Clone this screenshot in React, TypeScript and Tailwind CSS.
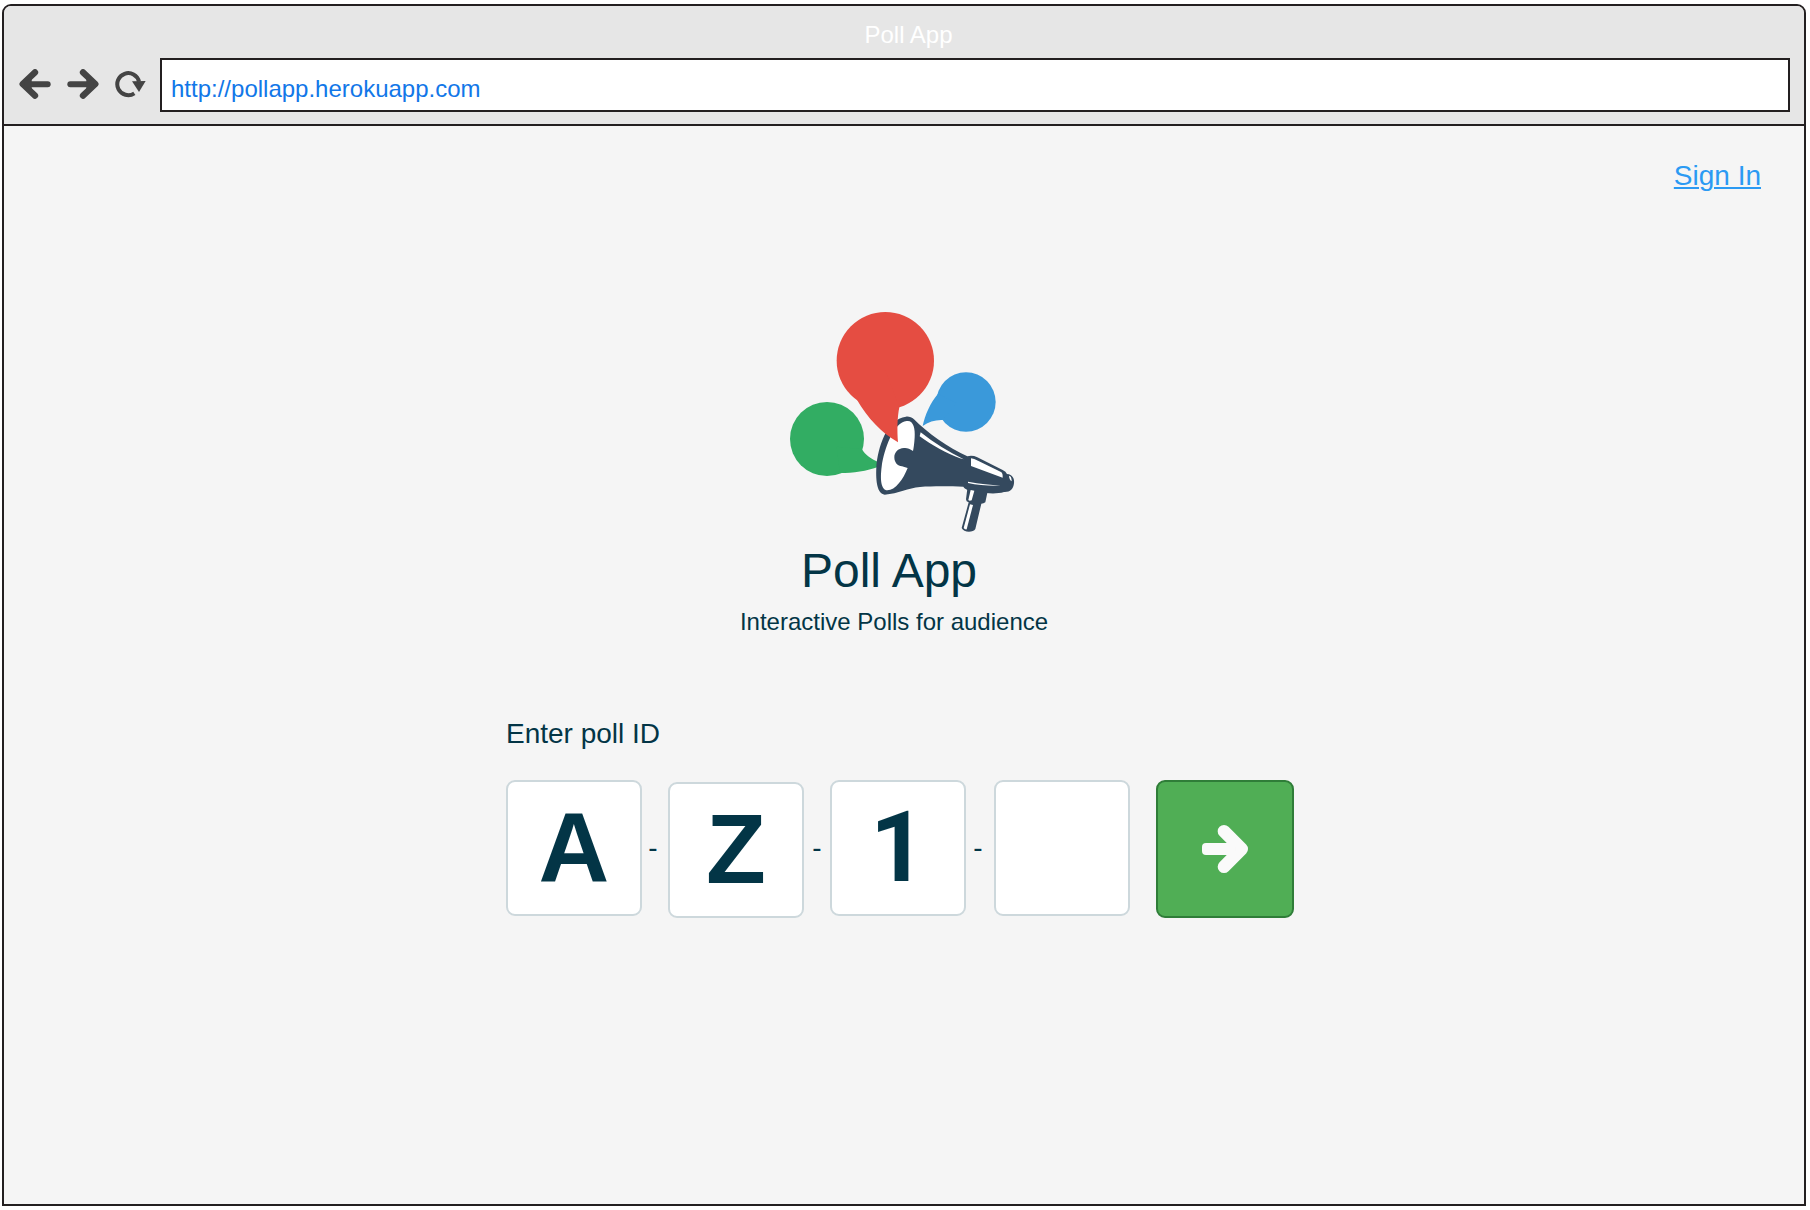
import React from "react";

function BackIcon() {
  return (
    <svg width="32" height="30" viewBox="0 0 96 90" fill="none" stroke="#444444" aria-hidden="true">
      <path d="M20 46H86" strokeWidth="18" strokeLinecap="round" />
      <path d="M48 10L11 45L48 80" strokeWidth="19" strokeLinecap="round" strokeLinejoin="round" />
      <path d="M12 45L38 22V68Z" fill="#444444" stroke="none" />
    </svg>
  );
}

function ForwardIcon() {
  return (
    <svg width="32" height="30" viewBox="0 0 96 90" fill="none" stroke="#444444" aria-hidden="true">
      <path d="M10 46H76" strokeWidth="18" strokeLinecap="round" />
      <path d="M48 10L85 45L48 80" strokeWidth="19" strokeLinecap="round" strokeLinejoin="round" />
      <path d="M84 45L58 22V68Z" fill="#444444" stroke="none" />
    </svg>
  );
}

function ReloadIcon() {
  return (
    <svg width="32" height="30" viewBox="0 0 96 90" fill="none" aria-hidden="true">
      <path d="M58 73A33 33 0 1 1 72 38" stroke="#444444" strokeWidth="12" />
      <path d="M51 37L92 36L72 69Z" fill="#444444" />
    </svg>
  );
}

function SubmitArrow() {
  return (
    <svg width="46" height="48" viewBox="0 0 138 144" fill="none" stroke="#fafafa" aria-hidden="true">
      <path d="M66 19L119 72L66 125" strokeWidth="38" strokeLinecap="round" strokeLinejoin="round" />
      <path d="M0 66Q0 54 12 54H100V90H12Q0 90 0 78Z" fill="#fafafa" stroke="none" />
    </svg>
  );
}

function Logo() {
  return (
    <svg width="225" height="224" viewBox="60 60 675 672" role="img" aria-label="Poll App logo">
      <g fill="#32ad63">
        <circle cx="171" cy="447" r="111" />
        <path d="M276 478C285 495 305 508 326 517V530C290 543 250 549 210 549L200 470Z" />
      </g>
      <g fill="#3a99da">
        <circle cx="588" cy="336" r="89" />
        <path d="M504 311C480 340 465 375 458 408C475 395 497 389 518 390L560 340Z" />
      </g>
      <g fill="#34495e">
        <path d="M408 380C417 379 425 382 432 388C470 427 535 474 592 499Q607 495 622 502L698 540Q708 545 711 552C728 553 734 567 732 580C730 598 720 607 702 606C686 611 665 611 648 609L600 602Q584 598 580 590C540 589 490 588 450 591C415 594 385 611 344 614C322 612 317 575 319 532C323 475 350 385 408 380Z" />
        <path d="M592 596L653 604L646 637Q641 641 634 641L616 717C610 728 580 728 575 714L596 637Q588 635 588 628Z" />
      </g>
      <g fill="#ffffff">
        <path d="M410 393C430 390 436 415 434 442C433 460 431 475 429 483C419 476 411 473 402 474C383 475 373 488 373 502C373 518 383 528 396 529L413 534C400 567 376 601 352 601C333 600 330 568 335 530C342 477 372 396 410 393Z" />
        <path d="M452 427C490 458 535 485 581 508L570 505C530 490 485 465 449 439Z" />
        <path d="M603 505Q612 506 624 512L693 546Q699 550 698 563L603 528Z" />
        <path d="M717 557Q725 558 725 574Q718 570 717 557Z" />
        <path d="M594 575C630 582 662 584 692 587C655 588 622 585 594 579Z" />
        <path d="M602 600L613 602L605 631Q598 634 595 630Z" />
        <path d="M600 643L609 645L590 718Q584 719 581 714Z" />
      </g>
      <g fill="#e54d42">
        <circle cx="346" cy="212" r="146" />
        <path d="M260 328C293 386 336 430 384 457C381 420 382 380 388 352L346 240Z" />
      </g>
    </svg>
  );
}

const letterBox =
  "block size-[136px] rounded-[9px] border-2 border-[#cdd8dc] bg-white p-0 pb-0.5 text-center text-[98px] font-bold text-[#033546] outline-none";

function Dash({ className }: { className: string }) {
  return (
    <span aria-hidden="true" className={`pt-[52px] text-center text-[28px] leading-8 ${className}`}>
      -
    </span>
  );
}

export default function App() {
  return (
    <div className="flex min-h-screen flex-col bg-white pt-1 pr-1 pb-1 pl-0.5 font-['Liberation_Sans',Arial,sans-serif] text-[#033546]">
      <div className="flex grow flex-col overflow-hidden rounded-t-[9px] border-2 border-[#231f20] bg-[#f5f5f5]">
        <header className="border-b-2 border-[#231f20] bg-[#e6e6e6] pt-[13px] pr-3.5 pb-3 pl-[15px]">
          <div className="pl-2 text-center text-2xl leading-8 text-white">Poll App</div>
          <div className="mt-[7px] flex items-center">
            <nav aria-label="Browser" className="flex gap-4 pb-0.5">
              <button type="button" aria-label="Back">
                <BackIcon />
              </button>
              <button type="button" aria-label="Forward">
                <ForwardIcon />
              </button>
              <button type="button" aria-label="Reload">
                <ReloadIcon />
              </button>
            </nav>
            <input
              type="text"
              aria-label="Address"
              defaultValue="http://pollapp.herokuapp.com"
              className="ml-[13px] h-[54px] min-w-0 grow border-2 border-[#231f20] bg-white pt-2 pr-2 pl-[9px] text-2xl text-[#1277e8] outline-none"
            />
          </div>
        </header>

        <main className="flex grow flex-col">
          <div className="flex justify-end pt-[34px] pr-[43px]">
            <a href="#sign-in" className="text-[28px] leading-8 text-[#2b9af3] underline decoration-2 underline-offset-2">
              Sign In
            </a>
          </div>

          <div className="mt-[118px] flex flex-col items-center">
            <div className="pr-1">
              <Logo />
            </div>
            <h1 className="mt-[13px] pr-[30px] text-5xl leading-[48px]">Poll App</h1>
            <p className="mt-[11px] pr-5 text-2xl leading-8">Interactive Polls for audience</p>
          </div>

          <form className="mx-auto mt-20 pr-2" onSubmit={(e) => e.preventDefault()}>
            <label htmlFor="poll-id-1" className="block text-[28px] leading-8">
              Enter poll ID
            </label>
            <div className="mt-[30px] flex items-start">
              <input id="poll-id-1" type="text" maxLength={1} defaultValue="A" className={letterBox} />
              <Dash className="w-[26px] pr-1" />
              <input type="text" maxLength={1} aria-label="Second character" defaultValue="Z" className={`mt-0.5 ${letterBox}`} />
              <Dash className="w-[26px]" />
              <input
                type="text"
                maxLength={1}
                aria-label="Third character"
                defaultValue="1"
                className={`font-[Roboto,sans-serif] ${letterBox}`}
              />
              <Dash className="w-7 pr-1" />
              <input type="text" maxLength={1} aria-label="Fourth character" className={letterBox} />
              <button
                type="submit"
                aria-label="Join poll"
                className="ml-[26px] flex size-[138px] items-center justify-center rounded-[9px] border-2 border-[#2f7d38] bg-[#50ae55]"
              >
                <SubmitArrow />
              </button>
            </div>
          </form>
        </main>
      </div>
    </div>
  );
}
